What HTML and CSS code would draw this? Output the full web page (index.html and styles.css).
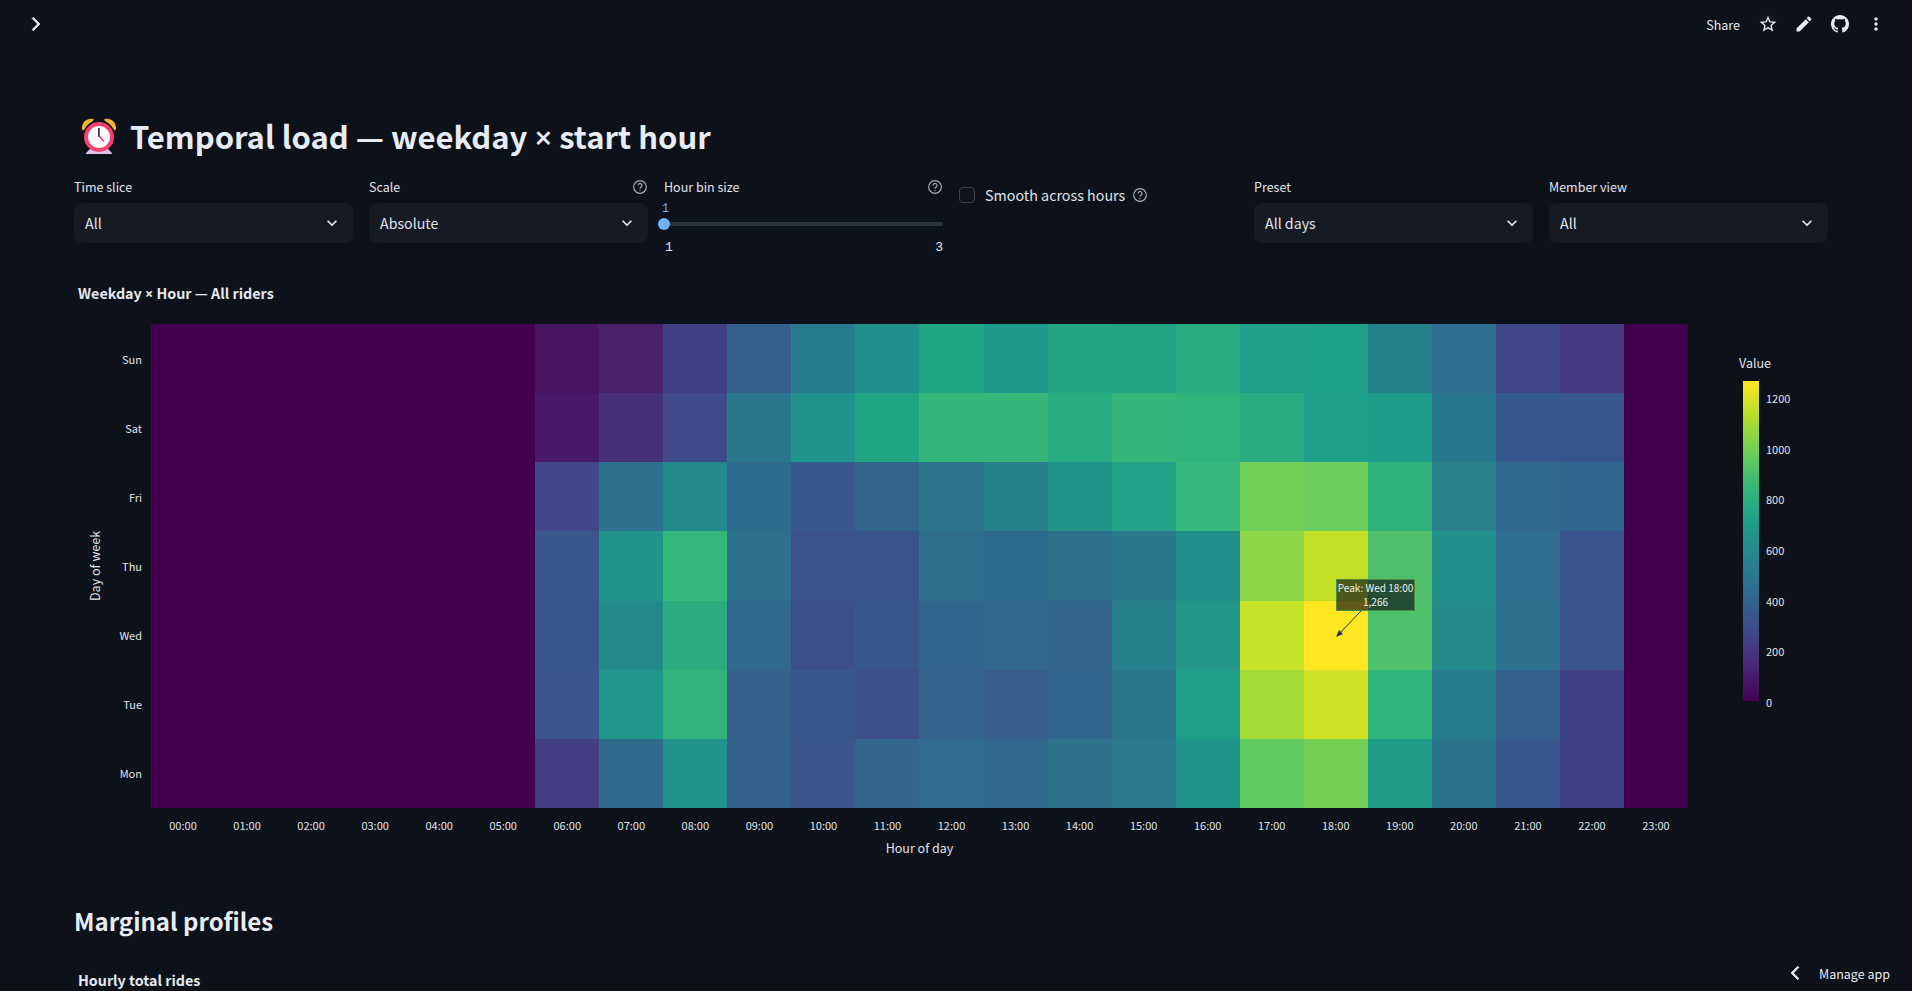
FILE: index.html
```html
<!DOCTYPE html>
<html lang="en">
<head>
<meta charset="utf-8">
<title>Temporal load</title>
<link rel="stylesheet" href="styles.css">
</head>
<body>
<div class="app">
  <header class="topbar">
    <svg class="icon chevron-open" viewBox="0 0 24 24"><path d="M8.600 5.400 10 4l8 8-8 8-1.400-1.400L15.200 12z"/></svg>
    <div class="actions">
      <span class="share">Share</span>
      <svg class="icon" viewBox="0 0 24 24"><path d="M22 9.240l-7.190-.62L12 2 9.190 8.630 2 9.240l5.460 4.730L5.820 21 12 17.270 18.180 21l-1.630-7.030L22 9.240zM12 15.400l-3.760 2.270 1-4.280-3.320-2.880 4.380-.38L12 6.100l1.710 4.040 4.380.38-3.320 2.880 1 4.280L12 15.400z"/></svg>
      <svg class="icon" viewBox="0 0 24 24"><path d="M3 17.250V21h3.750L17.810 9.940l-3.750-3.750L3 17.250zM20.710 7.040c.39-.39.39-1.020 0-1.410l-2.340-2.340c-.39-.39-1.020-.39-1.410 0l-1.830 1.830 3.750 3.750 1.830-1.830z"/></svg>
      <svg class="icon gh" viewBox="0 0 16 16"><path d="M8 0C3.580 0 0 3.580 0 8c0 3.540 2.290 6.530 5.470 7.590.4.07.55-.17.55-.38 0-.19-.01-.82-.01-1.490-2.010.37-2.530-.49-2.690-.94-.09-.23-.48-.94-.82-1.130-.28-.15-.68-.52-.01-.53.63-.01 1.080.58 1.230.82.72 1.210 1.870.87 2.330.66.07-.52.28-.87.51-1.070-1.780-.2-3.640-.89-3.640-3.950 0-.87.31-1.590.82-2.150-.08-.2-.36-1.020.08-2.120 0 0 .67-.21 2.200.82.64-.18 1.320-.27 2-.27.68 0 1.360.09 2 .27 1.530-1.040 2.200-.82 2.200-.82.44 1.100.16 1.920.08 2.120.51.56.82 1.270.82 2.150 0 3.070-1.870 3.750-3.650 3.950.29.25.54.73.54 1.480 0 1.070-.01 1.930-.01 2.200 0 .21.15.46.55.38A8.013 8.013 0 0016 8c0-4.420-3.580-8-8-8z"/></svg>
      <svg class="icon" viewBox="0 0 24 24"><path d="M12 8c1.100 0 2-.9 2-2s-.9-2-2-2-2 .9-2 2 .9 2 2 2zm0 2c-1.100 0-2 .9-2 2s.9 2 2 2 2-.9 2-2-.9-2-2-2zm0 6c-1.100 0-2 .9-2 2s.9 2 2 2 2-.9 2-2-.9-2-2-2z"/></svg>
    </div>
  </header>

  <main class="main">
    <h1 class="title">
      <svg class="clock" viewBox="0 0 36 38">
        <path d="M1 11C1 5 6 1 12 2c1 0 1 1 0 2-4 2-7 5-9 9-1 1-2 0-2-2z" fill="#fbb52e"/>
        <path d="M35 11c0-6-5-10-11-9-1 0-1 1 0 2 4 2 7 5 9 9 1 1 2 0 2-2z" fill="#fbb52e"/>
        <path d="M10 31h16l5 5c.5.500 0 1-1 1H6c-1 0-1.500-.5-1-1z" fill="#dcc3e8"/>
        <circle cx="18" cy="20" r="13" fill="#f8fafc" stroke="#f7406e" stroke-width="4"/>
        <path d="M17 11h1.800v9H17z" fill="#3f3a4a"/>
        <path d="M17.500 19.500l1.300-1 4.500 5.500-1.300 1z" fill="#f7406e"/>
      </svg>
      <span>Temporal load — weekday <span class="times">×</span> start hour</span>
    </h1>

    <section class="controls">
      <div class="control">
        <div class="label-row"><label>Time slice</label></div>
        <div class="select"><span>All</span><svg viewBox="0 0 24 24"><path d="M16.600 8.600 12 13.200 7.400 8.600 6 10l6 6 6-6z"/></svg></div>
      </div>
      <div class="control">
        <div class="label-row"><label>Scale</label>
          <svg class="help" viewBox="0 0 24 24"><circle cx="12" cy="12" r="9.500"/><path d="M9.200 9.600a2.900 2.900 0 1 1 4.600 2.300c-1.100.8-1.800 1.400-1.800 2.800"/><circle class="dot" cx="12" cy="17.500" r=".9"/></svg>
        </div>
        <div class="select"><span>Absolute</span><svg viewBox="0 0 24 24"><path d="M16.600 8.600 12 13.200 7.400 8.600 6 10l6 6 6-6z"/></svg></div>
      </div>
      <div class="control">
        <div class="label-row"><label>Hour bin size</label>
          <svg class="help" viewBox="0 0 24 24"><circle cx="12" cy="12" r="9.500"/><path d="M9.200 9.600a2.900 2.900 0 1 1 4.600 2.300c-1.100.8-1.800 1.400-1.800 2.800"/><circle class="dot" cx="12" cy="17.500" r=".9"/></svg>
        </div>
        <div class="slider">
          <span class="slider-value">1</span>
          <div class="track"><div class="thumb"></div></div>
          <div class="slider-ends"><span>1</span><span>3</span></div>
        </div>
      </div>
      <div class="control check-control">
        <span class="checkbox"></span>
        <span class="check-text">Smooth across hours</span>
        <svg class="help" viewBox="0 0 24 24"><circle cx="12" cy="12" r="9.500"/><path d="M9.200 9.600a2.900 2.900 0 1 1 4.600 2.300c-1.100.8-1.800 1.400-1.800 2.800"/><circle class="dot" cx="12" cy="17.500" r=".9"/></svg>
      </div>
      <div class="control">
        <div class="label-row"><label>Preset</label></div>
        <div class="select"><span>All days</span><svg viewBox="0 0 24 24"><path d="M16.600 8.600 12 13.200 7.400 8.600 6 10l6 6 6-6z"/></svg></div>
      </div>
      <div class="control">
        <div class="label-row"><label>Member view</label></div>
        <div class="select"><span>All</span><svg viewBox="0 0 24 24"><path d="M16.600 8.600 12 13.200 7.400 8.600 6 10l6 6 6-6z"/></svg></div>
      </div>
    </section>

    <h3 class="chart-title">Weekday <span class="times">×</span> Hour — All riders</h3>

    <section class="chart">
      <div class="y-axis">
        <div class="y-title">Day of week</div>
        <div class="y-ticks"><span>Sun</span><span>Sat</span><span>Fri</span><span>Thu</span><span>Wed</span><span>Tue</span><span>Mon</span></div>
      </div>

      <div class="heatmap">
        <!-- Sun -->
        <i class="z"></i><i class="z"></i><i class="z"></i><i class="z"></i><i class="z"></i><i class="z"></i>
        <i style="background:#47145f"></i><i style="background:#4a216b"></i><i style="background:#433f84"></i><i style="background:#33608d"></i><i style="background:#277b8e"></i><i style="background:#21918c"></i><i style="background:#22a486"></i><i style="background:#1f9a8a"></i><i style="background:#25a584"></i><i style="background:#23a386"></i><i style="background:#2aab82"></i><i style="background:#20a088"></i><i style="background:#1fa188"></i><i style="background:#26808c"></i><i style="background:#2e6f92"></i><i style="background:#404686"></i><i style="background:#45397f"></i><i class="z"></i>
        <!-- Sat -->
        <i class="z"></i><i class="z"></i><i class="z"></i><i class="z"></i><i class="z"></i><i class="z"></i>
        <i style="background:#471a6a"></i><i style="background:#483079"></i><i style="background:#3e4b88"></i><i style="background:#2a788e"></i><i style="background:#1f948b"></i><i style="background:#22a585"></i><i style="background:#33b57a"></i><i style="background:#35b57a"></i><i style="background:#2aac81"></i><i style="background:#35b57a"></i><i style="background:#30b27b"></i><i style="background:#2aab82"></i><i style="background:#1f9f89"></i><i style="background:#1f9c89"></i><i style="background:#27778e"></i><i style="background:#375a8e"></i><i style="background:#37578c"></i><i class="z"></i>
        <!-- Fri -->
        <i class="z"></i><i class="z"></i><i class="z"></i><i class="z"></i><i class="z"></i><i class="z"></i>
        <i style="background:#40478a"></i><i style="background:#2d728f"></i><i style="background:#228a8a"></i><i style="background:#2e6c8e"></i><i style="background:#39598c"></i><i style="background:#33658c"></i><i style="background:#2d748e"></i><i style="background:#26808c"></i><i style="background:#20968a"></i><i style="background:#22a287"></i><i style="background:#35b879"></i><i style="background:#70d058"></i><i style="background:#6cce5a"></i><i style="background:#2fb17c"></i><i style="background:#29818c"></i><i style="background:#30688e"></i><i style="background:#30668e"></i><i class="z"></i>
        <!-- Thu -->
        <i class="z"></i><i class="z"></i><i class="z"></i><i class="z"></i><i class="z"></i><i class="z"></i>
        <i style="background:#3a578c"></i><i style="background:#20948a"></i><i style="background:#35b779"></i><i style="background:#2c708e"></i><i style="background:#3b528b"></i><i style="background:#3a558b"></i><i style="background:#2e6f8e"></i><i style="background:#2f6b8e"></i><i style="background:#2e6e8a"></i><i style="background:#29788d"></i><i style="background:#21908b"></i><i style="background:#8dd645"></i><i style="background:#c3df25"></i><i style="background:#50c16a"></i><i style="background:#22908a"></i><i style="background:#2e6d8e"></i><i style="background:#39558b"></i><i class="z"></i>
        <!-- Wed -->
        <i class="z"></i><i class="z"></i><i class="z"></i><i class="z"></i><i class="z"></i><i class="z"></i>
        <i style="background:#3a578c"></i><i style="background:#238a8a"></i><i style="background:#2dab80"></i><i style="background:#31698e"></i><i style="background:#3d4f89"></i><i style="background:#3a578c"></i><i style="background:#32658e"></i><i style="background:#32688e"></i><i style="background:#33658b"></i><i style="background:#27808e"></i><i style="background:#22978a"></i><i style="background:#c5e228"></i><i style="background:#ffe620"></i><i style="background:#4dc26b"></i><i style="background:#238a8a"></i><i style="background:#2e718e"></i><i style="background:#39558b"></i><i class="z"></i>
        <!-- Tue -->
        <i class="z"></i><i class="z"></i><i class="z"></i><i class="z"></i><i class="z"></i><i class="z"></i>
        <i style="background:#3b568c"></i><i style="background:#21968a"></i><i style="background:#32b37c"></i><i style="background:#35628c"></i><i style="background:#39578c"></i><i style="background:#3d5089"></i><i style="background:#34638d"></i><i style="background:#375e8c"></i><i style="background:#32658e"></i><i style="background:#2a768c"></i><i style="background:#1f9e89"></i><i style="background:#a5db36"></i><i style="background:#d0e225"></i><i style="background:#2eb37c"></i><i style="background:#277d8e"></i><i style="background:#34608d"></i><i style="background:#3f4385"></i><i class="z"></i>
        <!-- Mon -->
        <i class="z"></i><i class="z"></i><i class="z"></i><i class="z"></i><i class="z"></i><i class="z"></i>
        <i style="background:#463e82"></i><i style="background:#306a8d"></i><i style="background:#21948b"></i><i style="background:#35628c"></i><i style="background:#3b578c"></i><i style="background:#34658c"></i><i style="background:#316c90"></i><i style="background:#33688e"></i><i style="background:#2d718c"></i><i style="background:#2a798d"></i><i style="background:#1f958b"></i><i style="background:#60ca60"></i><i style="background:#74d055"></i><i style="background:#1f9b87"></i><i style="background:#2b748e"></i><i style="background:#38578c"></i><i style="background:#3f4285"></i><i class="z"></i>

        <svg class="peak-arrow" viewBox="0 0 28 28">
          <path d="M26 1 5 23" fill="none" stroke="#1d3a5c" stroke-width="1"/>
          <path d="M1 27 8 24 4 20z" fill="#1d3a5c"/>
        </svg>
        <div class="peak-note">Peak: Wed 18:00<br>1,266</div>
      </div>

      <aside class="legend">
        <div class="legend-title">Value</div>
        <div class="legend-body">
          <div class="legend-bar"></div>
          <div class="legend-ticks"><span>1200</span><span>1000</span><span>800</span><span>600</span><span>400</span><span>200</span><span>0</span></div>
        </div>
      </aside>

      <div class="x-axis">
        <div class="x-ticks"><span>00:00</span><span>01:00</span><span>02:00</span><span>03:00</span><span>04:00</span><span>05:00</span><span>06:00</span><span>07:00</span><span>08:00</span><span>09:00</span><span>10:00</span><span>11:00</span><span>12:00</span><span>13:00</span><span>14:00</span><span>15:00</span><span>16:00</span><span>17:00</span><span>18:00</span><span>19:00</span><span>20:00</span><span>21:00</span><span>22:00</span><span>23:00</span></div>
        <div class="x-title">Hour of day</div>
      </div>
    </section>

    <h2 class="section-title">Marginal profiles</h2>
    <h3 class="chart-title next">Hourly total rides</h3>
  </main>

  <div class="manage">
    <svg viewBox="0 0 24 24"><path d="M15.400 5.400 14 4l-8 8 8 8 1.400-1.400L8.800 12z"/></svg>
    <span>Manage app</span>
  </div>
</div>
</body>
</html>
```

FILE: styles.css
```css
* { box-sizing: border-box; }
html, body { margin: 0; padding: 0; height: 100%; }
body {
  background: #0d1119;
  color: #e6eaf2;
  font-family: "Noto Sans CJK SC", "Noto Sans", sans-serif;
  overflow: hidden;
}
.app { position: relative; height: 991px; overflow: hidden; }

.topbar {
  height: 48px;
  display: flex;
  align-items: center;
  justify-content: space-between;
  padding: 0 26px 0 25px;
}
.icon { width: 20px; height: 20px; fill: #e6eaf2; display: block; }
.chevron-open { stroke: #e6eaf2; stroke-width: 1; }
.actions { display: flex; align-items: center; gap: 16px; }
.share { font-size: 12.500px; margin-right: 2px; }
.gh { width: 18px; height: 18px; margin: 0 1px; }
.times { font-family: "Open Sans", sans-serif; }

.main { padding: 62px 84px 0 74px; }
.title {
  margin: 0;
  display: flex;
  align-items: center;
  height: 52px;
  font-size: 31px;
  font-weight: 600;
  line-height: 52px;
  color: #e8ecf4;
}
.clock { width: 36px; height: 38px; margin: 0 13px 0 7px; flex: none; }

.controls {
  display: grid;
  grid-template-columns: repeat(6, 279px);
  column-gap: 16px;
  margin-top: 14px;
  height: 104px;
}
.label-row {
  height: 27px;
  display: flex;
  justify-content: space-between;
  align-items: flex-start;
  font-size: 12.500px;
  line-height: 22px;
  color: #e0e4ec;
}
.help {
  width: 16px;
  height: 16px;
  fill: none;
  stroke: #a9afba;
  stroke-width: 1.700;
  flex: none;
  margin-top: 3px;
}
.help .dot { fill: #a9afba; stroke: none; }
.select {
  height: 40px;
  background: #151a23;
  border-radius: 8px;
  display: flex;
  align-items: center;
  justify-content: space-between;
  padding: 0 11px 0 11px;
  font-size: 14.200px;
  color: #e0e4ec;
}
.select svg { width: 20px; height: 20px; fill: #e6eaf2; }

.slider { position: relative; height: 60px; }
.slider-value {
  position: absolute;
  left: -2px;
  top: -2px;
  font-family: "Liberation Mono", monospace;
  font-size: 12px;
  line-height: 16px;
  color: #6cb2ff;
}
.track {
  position: absolute;
  left: 0;
  right: 0;
  top: 19px;
  height: 4px;
  border-radius: 2px;
  background: #2d333b;
}
.thumb {
  position: absolute;
  left: -6px;
  top: -4px;
  width: 12px;
  height: 12px;
  border-radius: 50%;
  background: #6cb2ff;
}
.slider-ends {
  position: absolute;
  left: 0;
  right: 0;
  top: 37px;
  display: flex;
  justify-content: space-between;
  padding: 0 0 0 1px;
  font-family: "Liberation Mono", monospace;
  font-size: 13px;
  line-height: 16px;
  color: #e0e4ec;
}

.check-control {
  display: flex;
  align-items: flex-start;
  padding-top: 11px;
}
.checkbox {
  width: 16px;
  height: 16px;
  border: 1px solid #3d434e;
  border-radius: 4px;
  background: #10141c;
  flex: none;
}
.check-text {
  font-size: 14.300px;
  line-height: 16px;
  margin: 0 7px 0 10px;
  color: #e0e4ec;
}
.check-control .help { margin-top: 0; }

.chart-title {
  margin: 0 0 0 4px;
  height: 24px;
  font-size: 14.300px;
  line-height: 24px;
  font-weight: 700;
  color: #e6eaf2;
}
.controls + .chart-title { margin-top: 1px; }
.chart {
  margin-top: 19px;
  display: grid;
  grid-template-columns: 77px 1537px 1fr;
}
.y-axis { display: flex; height: 484px; }
.y-title {
  writing-mode: vertical-rl;
  transform: rotate(180deg);
  width: 20px;
  margin-left: 11px;
  text-align: center;
  font-size: 12.500px;
  line-height: 20px;
  color: #e0e4ec;
}
.y-ticks {
  flex: 1;
  display: grid;
  grid-template-rows: repeat(7, 1fr);
  justify-items: end;
  align-items: center;
  padding: 0 9px 1px 0;
  font-size: 11px;
  color: #e0e4ec;
}
.heatmap {
  position: relative;
  height: 484px;
  display: grid;
  grid-template-columns: repeat(24, 1fr);
  grid-template-rows: repeat(7, 1fr);
}
.heatmap i { display: block; }
.heatmap .z { background: #43004f; }
.peak-note {
  position: absolute;
  left: 1185px;
  top: 255px;
  width: 79px;
  height: 32px;
  background: rgba(13, 17, 23, 0.66);
  border: 1px solid #4f8a45;
  color: #f0f0f0;
  font-size: 10px;
  line-height: 14px;
  text-align: center;
  padding-top: 1px;
  white-space: nowrap;
}
.peak-arrow {
  position: absolute;
  left: 1184px;
  top: 286px;
  width: 28px;
  height: 28px;
}
.legend { padding: 29px 0 0 51px; }
.legend-title { font-size: 12.500px; line-height: 20px; color: #e0e4ec; }
.legend-body { display: flex; align-items: flex-start; gap: 7px; margin: 8px 0 0 4px; }
.legend-bar {
  width: 16px;
  height: 320px;
  background: linear-gradient(to top, #440154, #482878 11%, #3e4989 22%, #31688e 33%, #26828e 44%, #1f9e89 56%, #35b779 67%, #6ece58 78%, #b5de2b 89%, #fde725);
}
.legend-ticks {
  height: 320px;
  margin-top: 9px;
  display: flex;
  flex-direction: column;
  justify-content: space-between;
  font-size: 11px;
  line-height: 16px;
  color: #e0e4ec;
}
.x-axis { grid-column: 2; }
.x-ticks {
  display: grid;
  grid-template-columns: repeat(24, 1fr);
  justify-items: center;
  margin-top: 9px;
  font-size: 11px;
  line-height: 16px;
  color: #e0e4ec;
}
.x-title {
  margin-top: 5px;
  text-align: center;
  font-size: 12.500px;
  line-height: 20px;
  color: #e0e4ec;
}
.section-title {
  margin: 40px 0 0;
  height: 46px;
  font-size: 24px;
  line-height: 46px;
  font-weight: 600;
  color: #e8ecf4;
}
.chart-title.next { margin-top: 24px; }
.manage {
  position: absolute;
  right: 22px;
  bottom: 6px;
  display: flex;
  align-items: center;
  gap: 13px;
  height: 24px;
  font-size: 12.500px;
  color: #e6eaf2;
}
.manage svg { width: 20px; height: 20px; fill: #e6eaf2; stroke: #e6eaf2; stroke-width: 1; }
```
